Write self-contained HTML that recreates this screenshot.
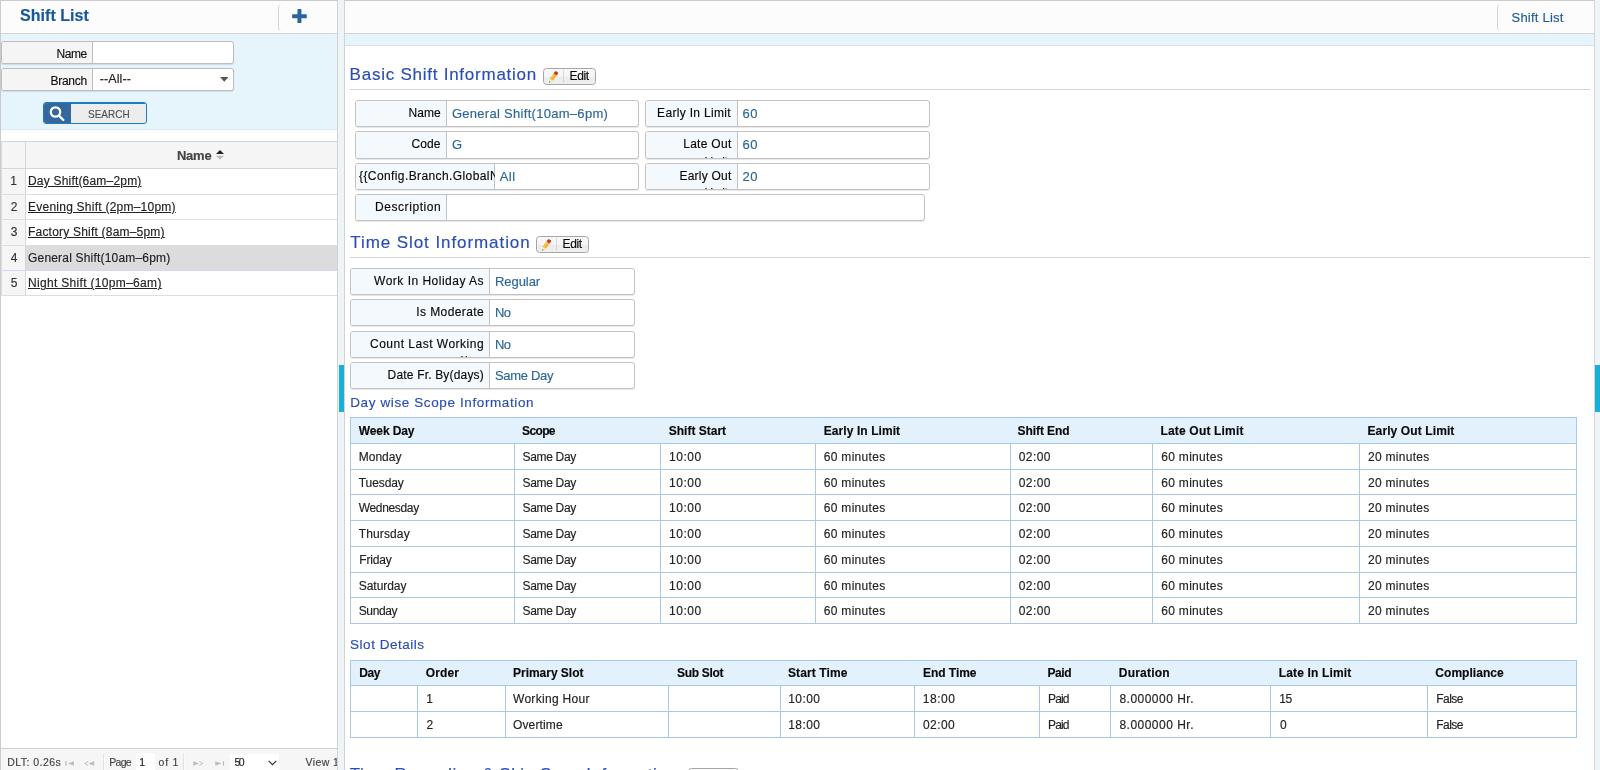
<!DOCTYPE html>
<html>
<head>
<meta charset="utf-8">
<title>Shift List</title>
<style>
*{box-sizing:border-box;margin:0;padding:0}
html,body{width:1600px;height:770px;overflow:hidden;background:#fff}
body{font-family:"Liberation Sans",sans-serif;font-size:12px;color:#222;position:relative}
#root{position:absolute;left:0;top:0;width:1600px;height:770px;overflow:hidden;will-change:transform}
.a{position:absolute}
.t{position:absolute;white-space:nowrap;line-height:1;-webkit-text-stroke:.15px}
.fld{position:absolute;border:1px solid #c2c2c2;border-radius:3px;background:#fff;overflow:hidden;box-shadow:0 1px 1px rgba(0,0,0,.10)}
.fld .lb{position:absolute;left:0;top:0;bottom:0;background:#f3f9fd;border-right:1px solid #c2c2c2}
.ebtn{position:absolute;height:17px;border:1px solid #a6a6a6;border-radius:3.5px;background:linear-gradient(#f9f9f9 0,#f5f5f5 50%,#ebebeb 52%,#efefef 100%)}
</style>
</head>
<body>
<div id="root">
<div class="a" style="left:0px;top:0px;width:338px;height:770px;background:#fff;border-left:1px solid #cbcbcb;border-right:1px solid #d2d2d2;border-top:1px solid #cbcbcb"></div>
<div class="a" style="left:1px;top:1px;width:336px;height:33px;background:#fcfcfc;border-bottom:1px solid #d3d3d3"></div>
<div class="t" style="left:20.0px;top:7.71px;font-size:16px;color:#15589b;letter-spacing:0.044px;font-weight:bold;">Shift List</div>
<div class="a" style="left:278px;top:4px;width:44px;height:27px;border-left:1px solid #d4d4d4;border-radius:4px 0 0 4px"></div>
<svg class="a" style="left:292px;top:8.600px" width="14.900" height="14.500" viewBox="0 0 15 15" preserveAspectRatio="none"><path d="M5.500 0.800Q5.500 0.100 6.200 0.100H8.800Q9.500 0.100 9.500 0.800V5.500H14.200Q14.900 5.500 14.900 6.200V8.800Q14.900 9.500 14.200 9.500H9.500V14.200Q9.500 14.900 8.800 14.900H6.200Q5.500 14.900 5.500 14.200V9.500H0.800Q0.100 9.500 0.100 8.800V6.200Q0.100 5.500 0.800 5.500H5.500z" fill="#2a63a1"/></svg>
<div class="a" style="left:1px;top:34px;width:336px;height:96px;background:#e6f4fb;border-bottom:1px solid #dfe9ef"></div>
<div class="fld" style="left:1px;top:41px;width:233px;height:23px;border-color:#bdbdbd"><div class="lb" style="width:91px;background:#f5f5f5;border-color:#bdbdbd"></div></div>
<div class="fld" style="left:1px;top:68px;width:233px;height:23px;border-color:#bdbdbd"><div class="lb" style="width:91px;background:#f5f5f5;border-color:#bdbdbd"></div></div>
<div class="t" style="left:56.5px;top:47.78px;font-size:12px;color:#111;letter-spacing:-0.467px;">Name</div>
<div class="t" style="left:50.5px;top:74.78px;font-size:12px;color:#111;letter-spacing:-0.28px;">Branch</div>
<div class="t" style="left:99.75px;top:73.12px;font-size:12.5px;color:#222;letter-spacing:0.1px;">--All--</div>
<svg class="a" style="left:219.700px;top:76.900px" width="8.500" height="4.700" viewBox="0 0 9 5"><path d="M0 0h9L4.500 5z" fill="#555"/></svg>
<div class="a" style="left:43px;top:102px;width:104px;height:21.500px;border:1.500px solid #1b7ec3;border-radius:3px;background:#ededed;overflow:hidden"><div class="a" style="left:0;top:-1px;width:27.200px;height:22px;background:#35679f"></div><div class="a" style="left:27.200px;top:0;right:0;height:.7px;background:#1b7ec3"></div><svg class="a" style="left:5px;top:2px" width="17" height="17" viewBox="0 0 17 17"><circle cx="6.500" cy="7" r="4.700" fill="none" stroke="#fff" stroke-width="2.300"/><path d="M9.900 10.500L14.300 15" stroke="#fff" stroke-width="2.400" stroke-linecap="round"/></svg></div>
<div class="t" style="left:88.1px;top:108.95px;font-size:11.5px;color:#505050;transform:scaleX(.868);transform-origin:0 0;">SEARCH</div>
<div class="a" style="left:1px;top:141px;width:336px;height:28px;background:#f5f5f5;border-top:1px solid #d6d6d6;border-bottom:1px solid #d6d6d6"></div>
<div class="a" style="left:1px;top:169px;width:25px;height:126px;background:#f5f5f5;"></div>
<div class="a" style="left:25px;top:141px;width:1px;height:154px;background:#d6d6d6;"></div>
<div class="a" style="left:1px;top:141px;width:1px;height:154px;background:#dcdcdc;"></div>
<div class="t" style="left:177.0px;top:149.0px;font-size:13px;color:#444;letter-spacing:-0.267px;font-weight:bold;">Name</div>
<svg class="a" style="left:215.500px;top:149.500px" width="8" height="10" viewBox="0 0 8 10"><path d="M0 4L4 0L8 4z" fill="#222"/><path d="M0 5.700L4 9.700L8 5.700z" fill="#bbb"/></svg>
<div class="a" style="left:26px;top:245px;width:311px;height:26px;background:#dcdcdc;"></div>
<div class="a" style="left:1px;top:194px;width:336px;height:1px;background:#dedede;"></div>
<div class="a" style="left:1px;top:219px;width:336px;height:1px;background:#dedede;"></div>
<div class="a" style="left:1px;top:245px;width:336px;height:1px;background:#dedede;"></div>
<div class="a" style="left:1px;top:270px;width:336px;height:1px;background:#d6d6ee;"></div>
<div class="a" style="left:1px;top:295px;width:336px;height:1px;background:#dedede;"></div>
<div class="t" style="left:10.3px;top:175.03px;font-size:12px;color:#333;">1</div>
<div class="t" style="left:28.0px;top:175.03px;font-size:12px;color:#222;letter-spacing:0.194px;text-decoration:underline;">Day Shift(6am–2pm)</div>
<div class="t" style="left:10.8px;top:201.03px;font-size:12px;color:#333;">2</div>
<div class="t" style="left:28.0px;top:201.03px;font-size:12px;color:#222;letter-spacing:0.239px;text-decoration:underline;">Evening Shift (2pm–10pm)</div>
<div class="t" style="left:10.8px;top:226.23px;font-size:12px;color:#333;">3</div>
<div class="t" style="left:28.0px;top:226.23px;font-size:12px;color:#222;letter-spacing:0.205px;text-decoration:underline;">Factory Shift (8am–5pm)</div>
<div class="t" style="left:10.8px;top:252.03px;font-size:12px;color:#333;">4</div>
<div class="t" style="left:28.0px;top:252.03px;font-size:12px;color:#222;letter-spacing:0.191px;">General Shift(10am–6pm)</div>
<div class="t" style="left:10.8px;top:277.23px;font-size:12px;color:#333;">5</div>
<div class="t" style="left:28.0px;top:277.23px;font-size:12px;color:#222;letter-spacing:0.319px;text-decoration:underline;">Night Shift (10pm–6am)</div>
<div class="a" style="left:1px;top:748px;width:336px;height:22px;background:#f6f6f6;border-top:1px solid #d0d0d0"></div>
<div class="a" style="left:338px;top:0px;width:6px;height:770px;background:#edf5f8;"></div>
<div class="a" style="left:339px;top:365px;width:5px;height:47px;background:#15b1d8;"></div>
<div class="a" style="left:344px;top:0px;width:1251px;height:770px;background:#fff;border-left:1px solid #d2d2d2;border-right:1px solid #d6d6d6;border-top:1px solid #cbcbcb"></div>
<div class="a" style="left:345px;top:1px;width:1249px;height:33px;background:#fcfcfc;border-bottom:1px solid #d3d3d3"></div>
<div class="a" style="left:345px;top:34px;width:1249px;height:12px;background:#e6f4fb;border-bottom:1px solid #dedede"></div>
<div class="a" style="left:1595px;top:0px;width:5px;height:770px;background:#edf5f8;"></div>
<div class="a" style="left:1595px;top:365px;width:5px;height:47px;background:#15b1d8;"></div>
<div class="a" style="left:1497px;top:4px;width:90px;height:27px;border-left:1px solid #d4d4d4;border-radius:4px 0 0 4px"></div>
<div class="t" style="left:349.6px;top:66.38px;font-size:17px;color:#2a4db3;letter-spacing:0.755px;">Basic Shift Information</div>
<div class="ebtn" style="left:543px;top:68px;width:53px"><svg class="a" style="left:3.600px;top:1.700px" width="11.600" height="13" viewBox="0 0 11 13" preserveAspectRatio="none"><path d="M4.590 9.870L1.590 7.870L5.250 2.380L8.250 4.380z" fill="#f0b62b"/><path d="M5.250 2.380L8.250 4.380L9.500 2.500Q9.900 1.800 9.200 1.300L7.700 0.300Q7 -0.100 6.500 0.600z" fill="#c63733"/><path d="M4.590 9.870L1.590 7.870L1.500 10.300L2.300 10.900z" fill="#f6e7b4"/><path d="M1.500 10.200L2.400 10.800L1.100 11.900z" fill="#3a3a3a"/><path d="M2.600 8.500L5.900 3.500" stroke="#f7d774" stroke-width="0.700" fill="none"/></svg><div class="a" style="left:19.200px;top:1px;width:1px;height:13px;background:#d8d8d8"></div></div>
<div class="t" style="left:569.6px;top:70.23px;font-size:12px;color:#0a0a0a;letter-spacing:-0.4px;">Edit</div>
<div class="a" style="left:350px;top:89px;width:1240px;height:1px;background:#d4d4d4;"></div>
<div class="fld" style="left:355px;top:100px;width:284px;height:27px"><div class="lb" style="width:91px"></div></div>
<div class="t" style="left:408.4px;top:107.13px;font-size:12px;color:#0a0a0a;letter-spacing:0.1px;">Name</div>
<div class="t" style="left:451.9px;top:107.4px;font-size:13px;color:#2b6699;letter-spacing:0.291px;">General Shift(10am–6pm)</div>
<div class="fld" style="left:355px;top:131px;width:284px;height:28px"><div class="lb" style="width:91px"></div></div>
<div class="t" style="left:411.6px;top:138.43px;font-size:12px;color:#0a0a0a;letter-spacing:0.033px;">Code</div>
<div class="t" style="left:451.9px;top:138.4px;font-size:13px;color:#2b6699;letter-spacing:-1.6px;">G</div>
<div class="fld" style="left:355px;top:163px;width:284px;height:27px"><div class="lb" style="width:139px"></div></div>
<div class="a" style="left:356px;top:164px;width:138.500px;height:25px;overflow:hidden">
<div class="t" style="left:3.0px;top:6.33px;font-size:12px;color:#0a0a0a;letter-spacing:0.4px;">{{Config.Branch.GlobalName}}</div>
</div>
<div class="t" style="left:499.7px;top:169.7px;font-size:13px;color:#2b6699;letter-spacing:0.5px;">All</div>
<div class="fld" style="left:355px;top:194px;width:570px;height:27px"><div class="lb" style="width:91px"></div></div>
<div class="t" style="left:375.0px;top:201.33px;font-size:12px;color:#0a0a0a;letter-spacing:0.57px;">Description</div>
<div class="fld" style="left:645px;top:100px;width:285px;height:27px"><div class="lb" style="width:92px"></div></div>
<div class="t" style="left:657.1px;top:107.13px;font-size:12px;color:#0a0a0a;letter-spacing:0.315px;">Early In Limit</div>
<div class="t" style="left:742.5px;top:107.0px;font-size:13px;color:#2b6699;letter-spacing:0.4px;">60</div>
<div class="fld" style="left:645px;top:131px;width:285px;height:28px"><div class="lb" style="width:92px"></div></div>
<div class="t" style="left:683.2px;top:138.43px;font-size:12px;color:#0a0a0a;letter-spacing:0.286px;">Late Out</div>
<div class="t" style="left:742.5px;top:138.4px;font-size:13px;color:#2b6699;letter-spacing:0.4px;">60</div>
<div class="fld" style="left:645px;top:163px;width:285px;height:27px"><div class="lb" style="width:92px"></div></div>
<div class="t" style="left:679.5px;top:169.73px;font-size:12px;color:#0a0a0a;letter-spacing:0.213px;">Early Out</div>
<div class="t" style="left:742.5px;top:169.7px;font-size:13px;color:#2b6699;letter-spacing:0.4px;">20</div>
<div class="a" style="left:646px;top:132px;width:91px;height:26px;overflow:hidden">
<div class="t" style="left:58.4px;top:23.93px;font-size:12px;color:#0a0a0a;letter-spacing:-0.5px;">Limit</div>
</div>
<div class="a" style="left:646px;top:164px;width:91px;height:25px;overflow:hidden">
<div class="t" style="left:58.4px;top:22.93px;font-size:12px;color:#0a0a0a;letter-spacing:-0.5px;">Limit</div>
</div>
<div class="t" style="left:350.25px;top:234.13px;font-size:17px;color:#2a4db3;letter-spacing:0.925px;">Time Slot Information</div>
<div class="ebtn" style="left:536px;top:236px;width:53px"><svg class="a" style="left:3.600px;top:1.700px" width="11.600" height="13" viewBox="0 0 11 13" preserveAspectRatio="none"><path d="M4.590 9.870L1.590 7.870L5.250 2.380L8.250 4.380z" fill="#f0b62b"/><path d="M5.250 2.380L8.250 4.380L9.500 2.500Q9.900 1.800 9.200 1.300L7.700 0.300Q7 -0.100 6.500 0.600z" fill="#c63733"/><path d="M4.590 9.870L1.590 7.870L1.500 10.300L2.300 10.900z" fill="#f6e7b4"/><path d="M1.500 10.200L2.400 10.800L1.100 11.900z" fill="#3a3a3a"/><path d="M2.600 8.500L5.900 3.500" stroke="#f7d774" stroke-width="0.700" fill="none"/></svg><div class="a" style="left:19.200px;top:1px;width:1px;height:13px;background:#d8d8d8"></div></div>
<div class="t" style="left:562.6px;top:238.33px;font-size:12px;color:#0a0a0a;letter-spacing:-0.4px;">Edit</div>
<div class="a" style="left:350px;top:257px;width:1240px;height:1px;background:#d4d4d4;"></div>
<div class="fld" style="left:350px;top:268px;width:285px;height:27px"><div class="lb" style="width:139px"></div></div>
<div class="t" style="left:374.1px;top:275.23px;font-size:12px;color:#0a0a0a;letter-spacing:0.488px;">Work In Holiday As</div>
<div class="t" style="left:495.0px;top:275.1px;font-size:13px;color:#2b6699;letter-spacing:-0.067px;">Regular</div>
<div class="fld" style="left:350px;top:299px;width:285px;height:27px"><div class="lb" style="width:139px"></div></div>
<div class="t" style="left:416.25px;top:306.23px;font-size:12px;color:#0a0a0a;letter-spacing:0.415px;">Is Moderate</div>
<div class="t" style="left:495.0px;top:306.4px;font-size:13px;color:#2b6699;letter-spacing:-0.7px;">No</div>
<div class="fld" style="left:350px;top:331px;width:285px;height:27px"><div class="lb" style="width:139px"></div></div>
<div class="t" style="left:370.0px;top:338.28px;font-size:12px;color:#0a0a0a;letter-spacing:0.494px;">Count Last Working</div>
<div class="t" style="left:495.0px;top:338.1px;font-size:13px;color:#2b6699;letter-spacing:-0.7px;">No</div>
<div class="a" style="left:461px;top:332px;width:11px;height:25px;overflow:hidden">
<div class="t" style="left:-4.5px;top:22.93px;font-size:12px;color:#0a0a0a;letter-spacing:0.5px;">Shift</div>
</div>
<div class="fld" style="left:350px;top:362px;width:285px;height:27px"><div class="lb" style="width:139px"></div></div>
<div class="t" style="left:387.6px;top:369.33px;font-size:12px;color:#0a0a0a;letter-spacing:0.175px;">Date Fr. By(days)</div>
<div class="t" style="left:495.0px;top:369.1px;font-size:13px;color:#2b6699;letter-spacing:-0.321px;">Same Day</div>
<div class="t" style="left:350.25px;top:395.79px;font-size:13.5px;color:#2a4db3;letter-spacing:0.61px;">Day wise Scope Information</div>
<div class="a" style="left:350px;top:417px;width:1227px;height:26px;background:#e2f1fb;"></div>
<div class="a" style="left:350px;top:417px;width:1227px;height:1px;background:#a8c8e8;"></div>
<div class="a" style="left:350px;top:443px;width:1227px;height:1px;background:#a8c8e8;"></div>
<div class="a" style="left:350px;top:469px;width:1227px;height:1px;background:#a8c8e8;"></div>
<div class="a" style="left:350px;top:494px;width:1227px;height:1px;background:#a8c8e8;"></div>
<div class="a" style="left:350px;top:520px;width:1227px;height:1px;background:#a8c8e8;"></div>
<div class="a" style="left:350px;top:546px;width:1227px;height:1px;background:#a8c8e8;"></div>
<div class="a" style="left:350px;top:572px;width:1227px;height:1px;background:#a8c8e8;"></div>
<div class="a" style="left:350px;top:597px;width:1227px;height:1px;background:#a8c8e8;"></div>
<div class="a" style="left:350px;top:623px;width:1227px;height:1px;background:#a8c8e8;"></div>
<div class="a" style="left:350px;top:417px;width:1px;height:207px;background:#a8c8e8;"></div>
<div class="a" style="left:1576px;top:417px;width:1px;height:207px;background:#a8c8e8;"></div>
<div class="a" style="left:514px;top:443px;width:1px;height:181px;background:#a8c8e8;"></div>
<div class="a" style="left:660px;top:443px;width:1px;height:181px;background:#a8c8e8;"></div>
<div class="a" style="left:815px;top:443px;width:1px;height:181px;background:#a8c8e8;"></div>
<div class="a" style="left:1010px;top:443px;width:1px;height:181px;background:#a8c8e8;"></div>
<div class="a" style="left:1152px;top:443px;width:1px;height:181px;background:#a8c8e8;"></div>
<div class="a" style="left:1359px;top:443px;width:1px;height:181px;background:#a8c8e8;"></div>
<div class="t" style="left:358.75px;top:425.03px;font-size:12px;color:#0a0a0a;letter-spacing:-0.107px;font-weight:bold;">Week Day</div>
<div class="t" style="left:522.0px;top:425.03px;font-size:12px;color:#0a0a0a;letter-spacing:-0.625px;font-weight:bold;">Scope</div>
<div class="t" style="left:668.75px;top:425.03px;font-size:12px;color:#0a0a0a;font-weight:bold;">Shift Start</div>
<div class="t" style="left:823.75px;top:425.03px;font-size:12px;color:#0a0a0a;letter-spacing:0.077px;font-weight:bold;">Early In Limit</div>
<div class="t" style="left:1017.5px;top:425.03px;font-size:12px;color:#0a0a0a;letter-spacing:-0.062px;font-weight:bold;">Shift End</div>
<div class="t" style="left:1160.5px;top:425.03px;font-size:12px;color:#0a0a0a;letter-spacing:0.173px;font-weight:bold;">Late Out Limit</div>
<div class="t" style="left:1367.5px;top:425.03px;font-size:12px;color:#0a0a0a;letter-spacing:0.107px;font-weight:bold;">Early Out Limit</div>
<div class="t" style="left:358.75px;top:450.83px;font-size:12px;color:#222;">Monday</div>
<div class="t" style="left:522.5px;top:450.83px;font-size:12px;color:#222;letter-spacing:-0.321px;">Same Day</div>
<div class="t" style="left:669.0px;top:450.83px;font-size:12px;color:#222;letter-spacing:0.562px;">10:00</div>
<div class="t" style="left:823.75px;top:450.83px;font-size:12px;color:#222;letter-spacing:0.306px;">60 minutes</div>
<div class="t" style="left:1018.75px;top:450.83px;font-size:12px;color:#222;letter-spacing:0.438px;">02:00</div>
<div class="t" style="left:1161.25px;top:450.83px;font-size:12px;color:#222;letter-spacing:0.306px;">60 minutes</div>
<div class="t" style="left:1368.0px;top:450.83px;font-size:12px;color:#222;letter-spacing:0.278px;">20 minutes</div>
<div class="t" style="left:358.75px;top:476.83px;font-size:12px;color:#222;letter-spacing:-0.083px;">Tuesday</div>
<div class="t" style="left:522.5px;top:476.83px;font-size:12px;color:#222;letter-spacing:-0.321px;">Same Day</div>
<div class="t" style="left:669.0px;top:476.83px;font-size:12px;color:#222;letter-spacing:0.562px;">10:00</div>
<div class="t" style="left:823.75px;top:476.83px;font-size:12px;color:#222;letter-spacing:0.306px;">60 minutes</div>
<div class="t" style="left:1018.75px;top:476.83px;font-size:12px;color:#222;letter-spacing:0.438px;">02:00</div>
<div class="t" style="left:1161.25px;top:476.83px;font-size:12px;color:#222;letter-spacing:0.306px;">60 minutes</div>
<div class="t" style="left:1368.0px;top:476.83px;font-size:12px;color:#222;letter-spacing:0.278px;">20 minutes</div>
<div class="t" style="left:358.75px;top:501.83px;font-size:12px;color:#222;letter-spacing:-0.338px;">Wednesday</div>
<div class="t" style="left:522.5px;top:501.83px;font-size:12px;color:#222;letter-spacing:-0.321px;">Same Day</div>
<div class="t" style="left:669.0px;top:501.83px;font-size:12px;color:#222;letter-spacing:0.562px;">10:00</div>
<div class="t" style="left:823.75px;top:501.83px;font-size:12px;color:#222;letter-spacing:0.306px;">60 minutes</div>
<div class="t" style="left:1018.75px;top:501.83px;font-size:12px;color:#222;letter-spacing:0.438px;">02:00</div>
<div class="t" style="left:1161.25px;top:501.83px;font-size:12px;color:#222;letter-spacing:0.306px;">60 minutes</div>
<div class="t" style="left:1368.0px;top:501.83px;font-size:12px;color:#222;letter-spacing:0.278px;">20 minutes</div>
<div class="t" style="left:358.75px;top:527.83px;font-size:12px;color:#222;letter-spacing:0.129px;">Thursday</div>
<div class="t" style="left:522.5px;top:527.83px;font-size:12px;color:#222;letter-spacing:-0.321px;">Same Day</div>
<div class="t" style="left:669.0px;top:527.83px;font-size:12px;color:#222;letter-spacing:0.562px;">10:00</div>
<div class="t" style="left:823.75px;top:527.83px;font-size:12px;color:#222;letter-spacing:0.306px;">60 minutes</div>
<div class="t" style="left:1018.75px;top:527.83px;font-size:12px;color:#222;letter-spacing:0.438px;">02:00</div>
<div class="t" style="left:1161.25px;top:527.83px;font-size:12px;color:#222;letter-spacing:0.306px;">60 minutes</div>
<div class="t" style="left:1368.0px;top:527.83px;font-size:12px;color:#222;letter-spacing:0.278px;">20 minutes</div>
<div class="t" style="left:359.2px;top:553.83px;font-size:12px;color:#222;letter-spacing:-0.14px;">Friday</div>
<div class="t" style="left:522.5px;top:553.83px;font-size:12px;color:#222;letter-spacing:-0.321px;">Same Day</div>
<div class="t" style="left:669.0px;top:553.83px;font-size:12px;color:#222;letter-spacing:0.562px;">10:00</div>
<div class="t" style="left:823.75px;top:553.83px;font-size:12px;color:#222;letter-spacing:0.306px;">60 minutes</div>
<div class="t" style="left:1018.75px;top:553.83px;font-size:12px;color:#222;letter-spacing:0.438px;">02:00</div>
<div class="t" style="left:1161.25px;top:553.83px;font-size:12px;color:#222;letter-spacing:0.306px;">60 minutes</div>
<div class="t" style="left:1368.0px;top:553.83px;font-size:12px;color:#222;letter-spacing:0.278px;">20 minutes</div>
<div class="t" style="left:358.75px;top:579.83px;font-size:12px;color:#222;letter-spacing:-0.043px;">Saturday</div>
<div class="t" style="left:522.5px;top:579.83px;font-size:12px;color:#222;letter-spacing:-0.321px;">Same Day</div>
<div class="t" style="left:669.0px;top:579.83px;font-size:12px;color:#222;letter-spacing:0.562px;">10:00</div>
<div class="t" style="left:823.75px;top:579.83px;font-size:12px;color:#222;letter-spacing:0.306px;">60 minutes</div>
<div class="t" style="left:1018.75px;top:579.83px;font-size:12px;color:#222;letter-spacing:0.438px;">02:00</div>
<div class="t" style="left:1161.25px;top:579.83px;font-size:12px;color:#222;letter-spacing:0.306px;">60 minutes</div>
<div class="t" style="left:1368.0px;top:579.83px;font-size:12px;color:#222;letter-spacing:0.278px;">20 minutes</div>
<div class="t" style="left:358.75px;top:604.83px;font-size:12px;color:#222;letter-spacing:-0.38px;">Sunday</div>
<div class="t" style="left:522.5px;top:604.83px;font-size:12px;color:#222;letter-spacing:-0.321px;">Same Day</div>
<div class="t" style="left:669.0px;top:604.83px;font-size:12px;color:#222;letter-spacing:0.562px;">10:00</div>
<div class="t" style="left:823.75px;top:604.83px;font-size:12px;color:#222;letter-spacing:0.306px;">60 minutes</div>
<div class="t" style="left:1018.75px;top:604.83px;font-size:12px;color:#222;letter-spacing:0.438px;">02:00</div>
<div class="t" style="left:1161.25px;top:604.83px;font-size:12px;color:#222;letter-spacing:0.306px;">60 minutes</div>
<div class="t" style="left:1368.0px;top:604.83px;font-size:12px;color:#222;letter-spacing:0.278px;">20 minutes</div>
<div class="t" style="left:350.1px;top:637.99px;font-size:13.5px;color:#2a4db3;letter-spacing:0.509px;">Slot Details</div>
<div class="a" style="left:350px;top:660px;width:1227px;height:25px;background:#e2f1fb;"></div>
<div class="a" style="left:350px;top:660px;width:1227px;height:1px;background:#a8c8e8;"></div>
<div class="a" style="left:350px;top:685px;width:1227px;height:1px;background:#a8c8e8;"></div>
<div class="a" style="left:350px;top:711px;width:1227px;height:1px;background:#a8c8e8;"></div>
<div class="a" style="left:350px;top:737px;width:1227px;height:1px;background:#a8c8e8;"></div>
<div class="a" style="left:350px;top:660px;width:1px;height:78px;background:#a8c8e8;"></div>
<div class="a" style="left:1576px;top:660px;width:1px;height:78px;background:#a8c8e8;"></div>
<div class="a" style="left:417px;top:685px;width:1px;height:53px;background:#a8c8e8;"></div>
<div class="a" style="left:505px;top:685px;width:1px;height:53px;background:#a8c8e8;"></div>
<div class="a" style="left:668px;top:685px;width:1px;height:53px;background:#a8c8e8;"></div>
<div class="a" style="left:780px;top:685px;width:1px;height:53px;background:#a8c8e8;"></div>
<div class="a" style="left:914px;top:685px;width:1px;height:53px;background:#a8c8e8;"></div>
<div class="a" style="left:1039px;top:685px;width:1px;height:53px;background:#a8c8e8;"></div>
<div class="a" style="left:1110px;top:685px;width:1px;height:53px;background:#a8c8e8;"></div>
<div class="a" style="left:1270px;top:685px;width:1px;height:53px;background:#a8c8e8;"></div>
<div class="a" style="left:1427px;top:685px;width:1px;height:53px;background:#a8c8e8;"></div>
<div class="t" style="left:359.25px;top:667.03px;font-size:12px;color:#0a0a0a;letter-spacing:-0.375px;font-weight:bold;">Day</div>
<div class="t" style="left:425.75px;top:667.03px;font-size:12px;color:#0a0a0a;letter-spacing:0.125px;font-weight:bold;">Order</div>
<div class="t" style="left:513.0px;top:667.03px;font-size:12px;color:#0a0a0a;letter-spacing:-0.023px;font-weight:bold;">Primary Slot</div>
<div class="t" style="left:677.0px;top:667.03px;font-size:12px;color:#0a0a0a;letter-spacing:-0.321px;font-weight:bold;">Sub Slot</div>
<div class="t" style="left:788.0px;top:667.03px;font-size:12px;color:#0a0a0a;letter-spacing:0.111px;font-weight:bold;">Start Time</div>
<div class="t" style="left:923.0px;top:667.03px;font-size:12px;color:#0a0a0a;letter-spacing:-0.036px;font-weight:bold;">End Time</div>
<div class="t" style="left:1047.5px;top:667.03px;font-size:12px;color:#0a0a0a;letter-spacing:-0.417px;font-weight:bold;">Paid</div>
<div class="t" style="left:1118.75px;top:667.03px;font-size:12px;color:#0a0a0a;letter-spacing:0.229px;font-weight:bold;">Duration</div>
<div class="t" style="left:1278.75px;top:667.03px;font-size:12px;color:#0a0a0a;letter-spacing:0.15px;font-weight:bold;">Late In Limit</div>
<div class="t" style="left:1435.3px;top:667.03px;font-size:12px;color:#0a0a0a;letter-spacing:0.044px;font-weight:bold;">Compliance</div>
<div class="t" style="left:426.3px;top:692.83px;font-size:12px;color:#222;">1</div>
<div class="t" style="left:513.0px;top:692.83px;font-size:12px;color:#222;letter-spacing:0.295px;">Working Hour</div>
<div class="t" style="left:788.25px;top:692.83px;font-size:12px;color:#222;letter-spacing:0.438px;">10:00</div>
<div class="t" style="left:922.75px;top:692.83px;font-size:12px;color:#222;letter-spacing:0.562px;">18:00</div>
<div class="t" style="left:1048.0px;top:692.83px;font-size:12px;color:#222;letter-spacing:-0.833px;">Paid</div>
<div class="t" style="left:1119.4px;top:692.83px;font-size:12px;color:#222;letter-spacing:0.491px;">8.000000 Hr.</div>
<div class="t" style="left:1279.3px;top:692.83px;font-size:12px;color:#222;letter-spacing:-0.5px;">15</div>
<div class="t" style="left:1436.25px;top:692.83px;font-size:12px;color:#222;letter-spacing:-0.525px;">False</div>
<div class="t" style="left:426.5px;top:718.83px;font-size:12px;color:#222;">2</div>
<div class="t" style="left:513.0px;top:718.83px;font-size:12px;color:#222;letter-spacing:0.143px;">Overtime</div>
<div class="t" style="left:788.25px;top:718.83px;font-size:12px;color:#222;letter-spacing:0.438px;">18:00</div>
<div class="t" style="left:923.0px;top:718.83px;font-size:12px;color:#222;letter-spacing:0.438px;">02:00</div>
<div class="t" style="left:1048.0px;top:718.83px;font-size:12px;color:#222;letter-spacing:-0.833px;">Paid</div>
<div class="t" style="left:1119.4px;top:718.83px;font-size:12px;color:#222;letter-spacing:0.491px;">8.000000 Hr.</div>
<div class="t" style="left:1279.9px;top:718.83px;font-size:12px;color:#222;">0</div>
<div class="t" style="left:1436.25px;top:718.83px;font-size:12px;color:#222;letter-spacing:-0.525px;">False</div>
<div class="t" style="left:349.8px;top:765.88px;font-size:17px;color:#2a4db3;letter-spacing:0.554px;">Time Recording &amp; Skip Scan Information</div>
<div class="ebtn" style="left:687.500px;top:768px;width:51px"></div>
<div class="t" style="left:1511.5px;top:11.2px;font-size:13px;color:#1f5a96;letter-spacing:0.222px;">Shift List</div>
<div class="t" style="left:7.2px;top:757.28px;font-size:10.5px;color:#444;letter-spacing:0.467px;">DLT: 0.26s</div>
<svg class="a" style="left:64.500px;top:760.500px" width="9.500" height="5" viewBox="0 0 9.500 5"><path d="M0.300 0.300h1.300v4.400H0.300z M9.200 0.200L3 2.500L9.200 4.800z" fill="#bdbdbd"/></svg>
<svg class="a" style="left:84px;top:760.500px" width="10.500" height="5" viewBox="0 0 10.500 5"><path d="M4.200 0.500L0.800 2.500L4.200 4.500" fill="none" stroke="#bdbdbd" stroke-width="1"/><path d="M10.200 0.200L4.500 2.500L10.200 4.800z" fill="#bdbdbd"/></svg>
<div class="a" style="left:103px;top:754px;width:1px;height:16px;background:#e2e2e2;"></div>
<div class="a" style="left:104px;top:754px;width:1px;height:16px;background:#fbfbfb;"></div>
<div class="t" style="left:109.2px;top:757.28px;font-size:10.5px;color:#444;letter-spacing:-0.7px;">Page</div>
<div class="a" style="left:136px;top:753px;width:18.5px;height:17px;background:#fff;"></div>
<div class="t" style="left:139.2px;top:757.28px;font-size:10.5px;color:#222;">1</div>
<div class="t" style="left:158.55px;top:757.08px;font-size:10.5px;color:#444;letter-spacing:0.783px;">of 1</div>
<div class="a" style="left:183px;top:754px;width:1px;height:16px;background:#e2e2e2;"></div>
<div class="a" style="left:184px;top:754px;width:1px;height:16px;background:#fbfbfb;"></div>
<svg class="a" style="left:193px;top:760.500px" width="10.500" height="5" viewBox="0 0 10.500 5"><path d="M6.300 0.500L9.700 2.500L6.300 4.500" fill="none" stroke="#bdbdbd" stroke-width="1"/><path d="M0.300 0.200L6 2.500L0.300 4.800z" fill="#bdbdbd"/></svg>
<svg class="a" style="left:214.500px;top:760.500px" width="9.500" height="5" viewBox="0 0 9.500 5"><path d="M7.900 0.300h1.300v4.400H7.900z M0.300 0.200L6.500 2.500L0.300 4.800z" fill="#bdbdbd"/></svg>
<div class="a" style="left:230px;top:753.5px;width:49px;height:17px;background:#fff;"></div>
<div class="t" style="left:234.6px;top:757.08px;font-size:10.5px;color:#222;letter-spacing:-1.6px;">50</div>
<svg class="a" style="left:267.500px;top:760px" width="9" height="6" viewBox="0 0 9 6"><path d="M0.700 0.800L4.500 4.700L8.300 0.800" fill="none" stroke="#333" stroke-width="1.200"/></svg>
<div class="a" style="left:300px;top:750px;width:37px;height:20px;overflow:hidden">
<div class="t" style="left:5.6px;top:7.08px;font-size:10.5px;color:#444;letter-spacing:.4px;">View 1 - 5 of 5</div>
</div>
</div>
</body>
</html>
